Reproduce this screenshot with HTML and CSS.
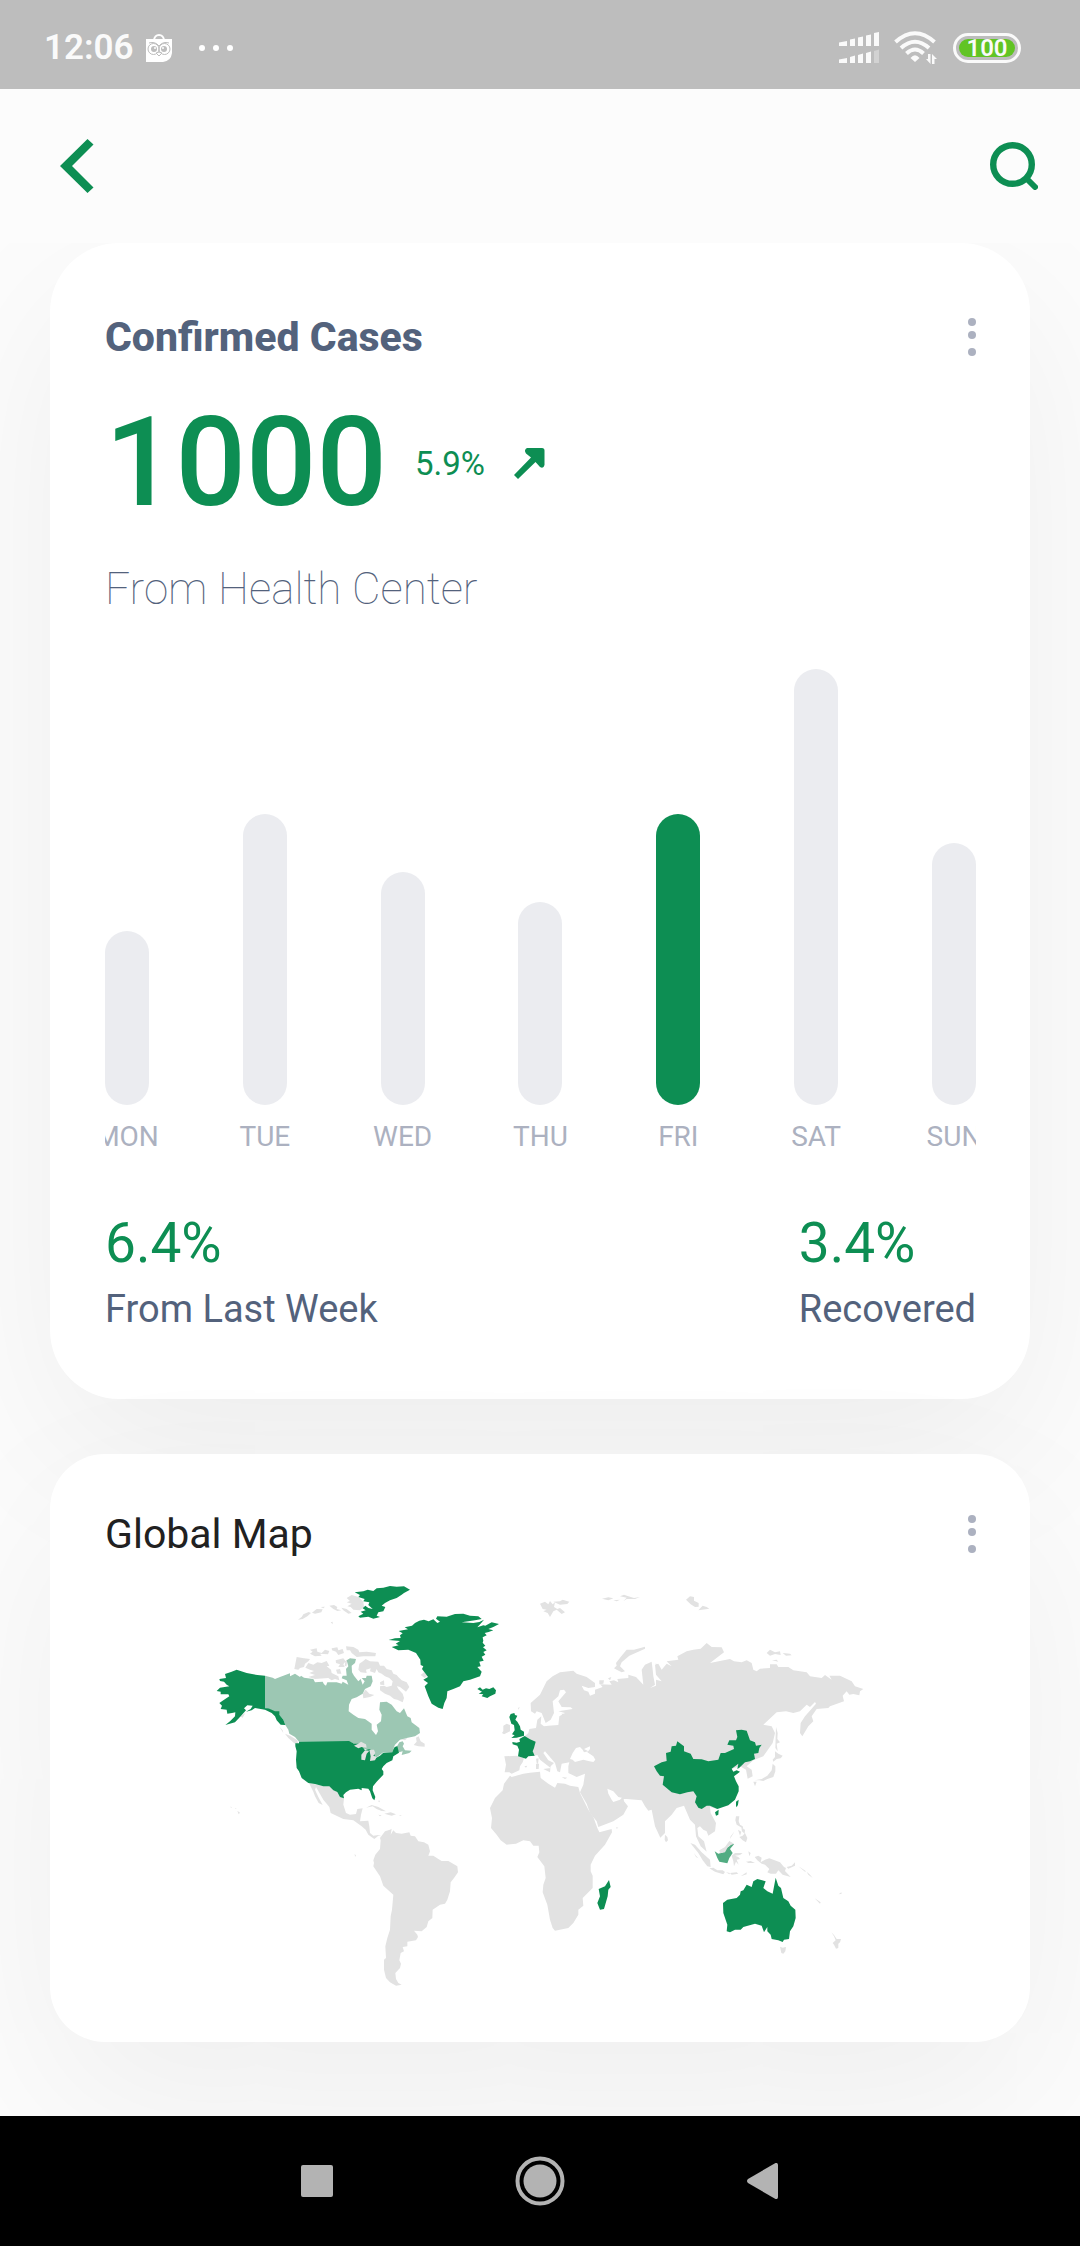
FILE: index.html
```html
<!DOCTYPE html>
<html lang="en">
<head>
<meta charset="utf-8">
<meta name="viewport" content="width=device-width, initial-scale=1">
<title>Confirmed Cases</title>
<link rel="stylesheet" href="styles.css">
</head>
<body>
<div class="status">
  <span class="status-time">12:06</span>
  <svg class="status-app" width="26" height="28" viewBox="0 0 26 28" aria-hidden="true">
    <path d="M8 7C8 -1 18 -1 18 7" fill="none" stroke="#fff" stroke-width="2"/>
    <path d="M0 5H26V19Q25 27 17 28H0Z" fill="#fff"/>
    <g fill="none" stroke="#bdbdbd" stroke-width="1"><circle cx="7.500" cy="15" r="5.500"/><circle cx="18.500" cy="15" r="5.500"/><path d="M3 9Q9 7 13 12Q17 7 23 9M10 19L13 22L16 19L13 18Z"/></g>
    <g fill="#bdbdbd"><circle cx="8" cy="15" r="3"/><circle cx="18" cy="15" r="3"/></g>
    <circle cx="9" cy="14" r="1" fill="#fff"/><circle cx="17" cy="14" r="1" fill="#fff"/>
  </svg>
  <svg class="status-more" width="34" height="6" viewBox="0 0 34 6" aria-hidden="true"><g fill="#fff"><circle cx="3" cy="3" r="3"/><circle cx="17" cy="3" r="3"/><circle cx="31" cy="3" r="3"/></g></svg>
  <div class="status-right">
    <svg width="40" height="32" viewBox="0 0 40 32" aria-hidden="true">
      <g fill="#fafafa"><path d="M0 10.500L8 9V14H0ZM11 7.500L16 6.500V14H11ZM19 5.500L24 4.500V14H19ZM27 3.500L32 2.500V14H27ZM35 1L40 0V14H35ZM0 27.500L8 26V31H0ZM11 25L16 23.500V31H11ZM19 23L24 21.500V31H19ZM27 21L32 19.500V31H27Z"/><path opacity=".35" d="M35 19L40 17.500V31H35Z"/></g>
    </svg>
    <svg width="44" height="34" viewBox="0 0 44 34" aria-hidden="true">
      <g fill="none" stroke="#fafafa" stroke-width="4"><path d="M1.500 11Q21 -6.500 40.500 11"/><path d="M7 17Q21 4.500 35 17"/><path d="M12.500 22.500Q21 14.500 29.500 22.500"/></g>
      <path d="M16.500 27Q21 21.500 25.500 27L21 31Z" fill="#fafafa"/>
      <path d="M34 23H36.500V33L32 28H34ZM38 33V23L43 28H40.500V33Z" fill="#fafafa"/>
    </svg>
    <div class="battery"><span class="battery-level">100</span></div>
  </div>
</div>

<header class="topbar">
  <button class="icon-button" type="button" aria-label="Back">
    <svg width="34" height="54" viewBox="0 0 34 54"><path d="M0 27L27.500 0L33.500 5.500L12 27L33.500 48.500L27.500 54Z"/></svg>
  </button>
  <button class="icon-button" type="button" aria-label="Search">
    <svg width="48" height="48" viewBox="0 0 48 48"><circle cx="22.500" cy="22.500" r="19.300" fill="none" stroke="#0d8e53" stroke-width="6.400"/><path d="M37 37L45 45" stroke="#0d8e53" stroke-width="6" stroke-linecap="round"/></svg>
  </button>
</header>

<main class="content">
  <section class="card card-report">
    <div class="card-head">
      <h1 class="card-title">Confirmed Cases</h1>
      <button class="icon-button menu" type="button" aria-label="Report options">
        <svg width="8" height="38" viewBox="0 0 8 38"><circle cx="4" cy="4" r="4"/><circle cx="4" cy="17" r="4"/><circle cx="4" cy="34" r="4"/></svg>
      </button>
    </div>
    <div class="total">
      <span class="total-value">1000</span>
      <span class="total-change">5.9%</span>
      <svg class="total-arrow" width="31" height="31" viewBox="0 0 31 31" aria-hidden="true"><path d="M13 0H28Q30.500 0 30.500 2.500V17Q29.500 21 26 19L21.500 14L4 31L0 27L17 9.500L12 5.500Q9.500 2 13 0Z" fill="#0d8e53"/></svg>
    </div>
    <p class="source">From Health Center</p>
    <div class="chart">
      <div class="day"><div class="bar" style="height:40%"></div></div>
      <div class="day"><div class="bar" style="height:66.670%"></div></div>
      <div class="day"><div class="bar" style="height:53.330%"></div></div>
      <div class="day"><div class="bar" style="height:46.670%"></div></div>
      <div class="day"><div class="bar bar-active" style="height:66.670%"></div></div>
      <div class="day"><div class="bar" style="height:100%"></div></div>
      <div class="day"><div class="bar" style="height:60%"></div></div>
    </div>
    <div class="axis">
      <span class="axis-label">MON</span><span class="axis-label">TUE</span><span class="axis-label">WED</span><span class="axis-label">THU</span><span class="axis-label">FRI</span><span class="axis-label">SAT</span><span class="axis-label">SUN</span>
    </div>
    <div class="stats">
      <div class="stat"><div class="stat-value">6.4%</div><div class="stat-label">From Last Week</div></div>
      <div class="stat"><div class="stat-value">3.4%</div><div class="stat-label">Recovered</div></div>
    </div>
  </section>

  <section class="card card-map">
    <div class="card-head">
      <h2 class="card-title">Global Map</h2>
      <button class="icon-button menu" type="button" aria-label="Map options">
        <svg width="8" height="38" viewBox="0 0 8 38"><circle cx="4" cy="4" r="4"/><circle cx="4" cy="17" r="4"/><circle cx="4" cy="34" r="4"/></svg>
      </button>
    </div>
    <svg class="map" viewBox="48 40 1950 1221" role="img" aria-label="World map">
      <g class="land">
        <path d="M440 85L455 76L468 80L475 82L490 96L492 112L480 122L460 120L452 112L442 110L455 102L440 98L450 94Z"/>
        <path d="M294 150L308 148L322 140L333 130L326 127L310 134L305 142ZM336 129L350 118L368 119L364 128L345 132ZM362 112L375 111L370 116ZM388 108L402 106L412 112L410 118L424 122L412 124L400 118ZM424 114L440 118L455 130L445 132L430 122ZM392 158L398 156L398 164Z"/>
        <path d="M330 240L350 236L352 246L365 250L375 240L388 244L384 254L360 252L365 258L345 260L330 252L338 246ZM395 236L412 233L415 242L428 238L432 250L415 256L408 246L396 242ZM438 230L460 232L475 240L478 248L500 246L528 250L526 260L490 260L470 262L455 250L450 242L440 242Z"/>
        <path d="M283 298L290 262L312 266L330 268L325 275L315 282L312 292L300 295L295 300ZM316 294L325 280L340 285L352 278L365 280L380 274L388 288L380 290L393 300L395 310L415 320L418 332L405 328L395 332L385 325L345 328L325 322L345 316L328 310L342 304L330 300ZM407 272L430 266L437 275L430 284L434 292L415 292L420 284L408 280ZM408 300L420 298L424 312L412 312ZM436 275L441 270L440 288L434 290Z"/>
        <path d="M475 300L478 282L490 274L497 268L510 275L535 276L540 288L552 288L560 298L575 302L580 312L590 316L595 322L605 332L620 338L628 352L618 366L600 352L590 348L595 358L608 372L612 385L608 398L592 390L582 388L570 378L555 372L540 362L540 350L552 348L560 352L575 348L578 335L568 325L555 320L545 312L535 308L530 298L525 310L510 305L512 296L498 300L500 310L482 308ZM488 372L497 360L508 372L523 376L510 382L490 386ZM540 338L552 332L553 346L541 345ZM580 346L588 340L600 352ZM662 316L672 308L682 318L674 325Z"/>
        <path d="M641 526L650 516L648 504L656 500L662 515L674 522L674 531L655 530ZM600 507L622 506L615 512ZM255 492L270 498L292 512L296 528L282 520L265 505ZM237 470L248 482L250 490ZM120 440L136 430L128 444ZM90 711L96 712L94 714ZM105 715L110 717L107 718ZM112 723L120 729L116 734Z"/>
        <path d="M327 640L365 648L388 648L400 662L412 665L432 686L430 705L438 730L450 735L468 733L472 718L488 716L483 735L480 755L505 753L508 770L510 790L520 798L535 796L545 800L535 798L523 808L505 795L497 780L485 770L460 752L430 748L392 730L388 712L370 690L348 652L345 660L355 682L368 706L356 700L345 680L340 666Z"/>
        <path d="M498 714L515 706L535 712L558 725L545 724L530 718L518 710ZM553 732L572 728L588 734L575 738ZM535 735L545 737L540 740ZM598 736L606 738L600 739ZM537 690L540 698L535 696ZM464 852L468 858L465 861Z"/>
        <path d="M540 805L555 785L570 780L575 777L572 795L580 782L588 790L605 792L628 788L632 798L645 800L655 815L672 818L685 825L690 845L685 858L700 858L715 868L725 874L745 874L772 890L774 908L762 925L752 938L750 965L742 990L735 1002L720 1005L698 1020L697 1045L685 1055L680 1072L665 1085L642 1083L652 1095L654 1102L648 1112L622 1116L622 1130L608 1132L612 1145L602 1150L598 1172L603 1182L600 1195L586 1210L588 1228L595 1240L605 1245L588 1248L570 1238L558 1225L552 1200L552 1170L558 1165L556 1130L562 1105L570 1080L572 1040L576 1020L580 975L550 948L540 920L520 890L522 880L520 872L526 855L540 838L542 812Z"/>
      </g>
      <path class="tint" d="M195 318L218 324L225 328L240 322L262 314L270 311L270 320L285 312L300 322L303 318L312 324L340 328L345 338L368 336L372 344L378 348L382 338L410 338L425 342L428 336L445 345L440 332L425 326L428 318L440 318L438 298L445 290L440 272L450 266L468 268L465 280L455 288L456 308L462 318L475 335L482 328L488 345L494 335L485 325L498 325L500 318L515 318L518 335L512 350L495 358L488 372L470 383L455 388L447 405L446 425L460 435L475 445L495 448L515 462L515 480L528 496L534 485L530 465L543 455L545 435L538 420L540 398L560 396L575 405L590 425L600 430L612 416L622 440L632 445L635 458L658 475L660 490L645 500L620 505L600 510L585 525L580 537L592 528L598 518L608 515L612 522L608 530L615 542L635 543L628 550L605 556L608 545L597 548L590 540L575 548L550 548L540 555L520 570L512 570L515 560L520 552L500 540L478 532L462 522L447 516L297 516L285 502L268 492L265 480L256 466L250 450L238 435L222 427L205 416L195 418Z"/>
      <g class="strong">
        <path d="M464 68L490 65L503 60L520 64L530 56L550 54L570 49L590 51L612 50L630 60L612 70L605 75L590 85L570 92L555 100L545 108L556 112L550 125L535 128L530 138L540 142L520 147L505 141L480 144L475 140L490 132L482 126L497 122L488 116L496 108L505 115L518 118L505 106L508 98L490 95L494 88L475 82L480 76Z"/>
        <path d="M566 211L585 206L602 205L600 197L608 191L596 184L624 179L614 173L636 168L645 160L658 153L672 150L686 155L700 149L712 160L720 156L708 147L712 140L740 141L765 133L790 132L810 138L835 140L845 148L825 152L785 158L820 160L838 157L852 150L843 161L832 173L850 167L856 168L875 158L897 163L880 172L865 178L880 182L866 187L854 190L860 197L848 203L850 213L848 219L856 228L849 233L860 242L850 247L856 255L845 261L851 273L838 276L842 290L832 292L845 306L840 320L810 330L790 335L780 350L760 358L742 365L740 385L733 400L728 418L715 414L695 402L685 380L674 350L684 340L670 330L684 322L675 310L666 298L670 290L662 286L661 270L648 250L625 240L595 242L575 232L596 227L587 222L600 214Z"/>
        <path d="M832 358L840 353L848 360L858 356L868 358L880 353L888 362L886 372L870 380L862 385L845 380L850 374L836 372L846 366Z"/>
        <path d="M195 318L172 316L140 310L110 300L95 306L75 313L78 325L58 328L60 334L72 336L80 345L88 350L60 354L50 364L62 366L62 374L85 374L88 380L70 392L58 400L66 408L62 418L80 420L82 432L96 430L106 428L105 440L90 455L76 466L105 458L122 440L138 422L132 416L142 407L158 408L152 418L138 426L155 422L165 415L195 420L215 430L225 440L230 452L242 465L256 466L250 450L238 435L238 425L225 425L205 416L195 416Z"/>
        <path d="M286 521L297 521L297 516L447 514L462 522L475 522L490 535L495 542L510 538L520 550L525 558L518 570L540 558L550 549L577 548L584 532L592 530L597 549L580 560L577 572L560 580L550 590L545 598L550 605L550 615L530 636L519 650L518 662L526 682L523 692L517 686L510 665L505 657L485 655L485 662L475 657L450 660L438 668L430 676L432 686L420 682L412 667L400 662L388 650L370 650L345 643L325 640L305 625L297 605L290 595L288 570L290 545L286 530Z"/>
      </g>
      <path class="land" d="M462 528L475 522L483 516L498 524L500 534L485 532L475 536ZM484 570L484 555L495 542L508 543L500 552L495 572ZM508 540L522 540L526 550L520 558L530 562L525 572L510 574L512 560Z"/>
      <g transform="translate(840 0)">
        <g class="land">
          <path d="M134 500L145 490L148 478L168 475L172 450L184 440L182 462L192 470L205 468L235 466L238 440L255 430L235 425L278 418L272 413L245 412L235 395L258 368L252 360L240 362L235 380L218 395L222 430L212 450L197 460L185 430L170 425L165 432L153 425L152 400L180 375L200 335L218 320L240 308L280 303L290 312L320 322L345 340L345 352L325 355L305 348L312 362L325 366L330 378L345 372L345 360L368 352L360 344L395 345L388 335L402 332L415 338L412 328L445 325L445 315L468 322L490 345L485 300L495 285L515 276L518 300L520 320L525 345L510 355L528 348L528 330L545 335L528 315L525 285L535 282L545 300L560 282L575 290L560 275L595 270L592 260L620 245L640 240L662 237L680 220L695 232L725 233L732 248L690 280L750 268L762 275L785 278L800 272L815 280L820 300L830 305L840 297L870 295L870 284L890 284L895 292L925 292L940 302L980 308L990 320L1025 325L1035 316L1055 330L1048 318L1080 318L1115 335L1125 350L1150 358L1140 365L1138 377L1120 373L1108 375L1100 365L1088 378L1092 395L1050 410L1045 415L1010 418L995 440L1000 455L985 470L967 500L960 490L962 460L975 440L1008 402L1005 397L990 412L980 405L960 425L940 430L918 425L890 428L850 465L875 470L885 490L878 520L850 560L820 572L800 590L815 600L818 620L803 627L798 600L780 590L755 597L740 640L712 718L690 712L692 730L708 760L705 785L685 798L680 785L670 780L660 770L652 775L655 800L672 815L680 846L662 830L648 800L645 765L630 750L612 708L590 715L575 735L555 755L555 790L541 804L525 770L515 720L505 723L495 710L485 692L440 688L415 682L400 665L382 657L385 672L395 690L400 697L420 690L430 680L432 695L444 710L430 735L400 755L355 772L350 755L330 730L320 702L300 668L310 645L315 612L290 622L265 610L265 590L268 578L245 582L240 608L232 605L225 580L195 545L190 550L205 572L222 580L212 590L210 608L190 598L212 595L180 570L172 556L158 560L155 530Z"/>
          <path d="M66 490L70 484L70 468L80 462L90 466L90 485L72 494ZM73 560L110 558L132 566L128 578L120 590L118 602L95 612L88 608L74 608L78 585ZM133 590L142 588L138 594ZM168 567L176 566L174 582L170 580ZM168 582L177 582L176 598L168 598ZM245 622L262 624L255 628ZM114 415L119 412L116 420ZM244 432L252 432L250 440Z"/>
          <path d="M90 618L95 622L130 612L150 609L180 606L182 625L205 642L225 654L232 640L255 642L270 648L295 652L300 670L325 720L340 742L352 775L358 788L395 778L396 788L375 825L345 858L332 885L332 905L338 918L338 955L308 985L310 1008L295 1020L295 1035L280 1060L265 1075L225 1083L218 1075L210 1050L202 1005L188 968L190 945L197 925L193 890L172 862L178 848L176 828L160 828L150 815L130 812L108 822L80 825L62 812L50 795L33 775L36 745L30 715L45 685L68 662L72 642Z"/>
          <path d="M180 102L195 96L205 104L210 94L218 104L225 98L222 112L232 118L240 115L255 128L245 133L230 120L220 125L210 142L203 130L190 125L200 120L188 118ZM220 96L240 95L248 90L268 96L262 103L240 105ZM366 87L385 83L400 86L385 92ZM400 92L420 90L410 95ZM420 80L432 75L445 80L462 85L480 82L465 88L440 88L430 95L440 84ZM610 78L620 80ZM618 90L630 80L642 82L642 93L656 100L656 111L645 112L632 104ZM655 122L668 108L680 112L688 117ZM860 250L870 240L885 248L900 245L902 256L885 253L870 258ZM908 250L930 252L935 257L918 258ZM876 272L890 270L895 276ZM878 263L884 266Z"/>
          <path d="M402 296L410 288L408 280L425 258L440 240L462 240L495 231L495 237L475 246L448 258L425 278L420 290L435 305L425 308L410 300ZM358 332L372 332L370 342L358 344ZM384 326L394 322L390 332ZM527 280L534 290L530 296Z"/>
          <path d="M888 472L893 490L892 508L900 518L890 522L893 545L886 535ZM878 570L885 562L885 545L895 552L908 558L902 566L890 568L880 576ZM824 632L845 628L862 618L875 602L878 582L886 590L886 605L880 622L862 628L850 634L838 632ZM820 636L830 636L825 650ZM555 795L562 802L564 812L558 818L554 810ZM408 773L415 774L410 777Z"/>
          <path d="M768 740L778 740L776 755L780 765L788 770L790 778L778 770L770 765L766 752ZM784 775L795 780L794 792L786 785ZM778 802L788 798L795 790L802 805L798 818L788 812ZM774 780L784 786L780 798ZM764 785L750 808L752 800Z"/>
          <path d="M631 820L645 825L665 848L690 870L692 892L682 890L668 872L655 850ZM642 850L648 858L655 866L648 862ZM688 896L700 894L712 902L728 902L735 907L730 914L705 906ZM738 908L750 910L748 914ZM750 910L770 908L775 912L755 915ZM782 920L800 908L800 914ZM755 858L765 850L788 850L780 856L765 858L775 862L780 868L770 870L776 885L768 876L762 890L760 875ZM805 845L812 850L808 860ZM798 876L812 874L825 880L805 880Z"/>
          <path d="M824 862L835 858L845 864L842 878L855 870L868 866L900 878L912 892L918 895L915 904L932 922L908 915L895 902L888 912L872 912L862 908L868 898L855 885L845 882L832 872ZM920 892L935 888L945 878L945 888L925 897ZM955 890L968 898L978 905L975 906ZM980 906L990 915L998 925L985 915ZM1004 986L1022 998L1020 1002ZM1076 974L1084 968L1085 972Z"/>
          <path d="M900 1131L908 1134L918 1132L916 1145L910 1152L904 1150ZM1054 1088L1062 1096L1070 1108L1083 1108L1080 1118L1075 1122L1075 1135L1068 1137L1062 1125L1058 1120L1067 1112L1062 1100Z"/>
        </g>
        <path class="sea" d="M270 568L278 550L288 535L300 532L308 540L312 548L325 545L312 538L330 530L330 538L322 548L340 560L346 570L340 577L325 574L310 570L285 577L278 570Z"/>
        <path class="half" d="M704 845L715 852L730 848L740 835L750 828L752 820L762 824L750 838L758 850L748 865L742 881L718 876L712 865Z"/>
        <path class="land" d="M718 842L735 832L748 814L762 822L745 830L735 848L720 851Z"/>
        <g class="strong">
          <path d="M88 442L92 433L103 430L105 436L112 438L106 450L112 456L120 470L122 480L132 486L132 498L110 504L94 505L104 497L96 494L104 482L102 466L94 462Z"/>
          <path d="M97 517L110 519L120 516L118 508L134 499L150 509L167 516L162 535L158 545L164 558L145 560L138 567L114 560L117 540L112 528L98 524Z"/>
          <path d="M387 931L392 952L385 960L383 980L372 1018L360 1020L352 1000L360 980L356 958L375 950Z"/>
          <path d="M522 590L545 578L560 574L558 550L572 546L575 530L588 528L592 515L612 530L612 545L632 552L640 568L665 569L685 575L715 570L722 550L735 550L762 538L760 528L742 525L748 512L768 512L772 502L768 482L785 480L800 483L810 512L825 518L828 528L845 525L838 535L835 550L822 552L825 568L810 575L795 578L778 594L772 598L775 582L755 597L760 606L770 602L780 606L762 620L768 635L776 650L776 665L765 690L745 707L712 718L690 708L680 708L665 718L655 714L645 698L650 680L640 665L622 668L600 674L575 668L548 645L552 620L540 618L530 605Z"/>
          <path d="M705 728L716 720L715 735L708 738ZM768 708L768 696L776 690L774 705L770 713Z"/>
          <path d="M729 1000L742 990L770 985L780 975L782 965L790 962L800 945L815 952L820 935L832 928L857 935L850 955L862 965L878 972L887 924L895 948L903 955L910 985L925 995L932 1008L946 1020L947 1045L940 1070L930 1085L927 1108L912 1110L908 1117L895 1112L875 1108L872 1095L862 1085L862 1072L852 1088L845 1068L825 1062L790 1072L782 1080L765 1080L750 1088L740 1085L742 1065L730 1030Z"/>
        </g>
      </g>
    </svg>
  </section>
</main>

<nav class="navbar" aria-label="System navigation">
  <button class="icon-button" type="button" aria-label="Recent apps"><svg width="32" height="32" viewBox="0 0 32 32"><rect width="32" height="32" rx="2"/></svg></button>
  <button class="icon-button" type="button" aria-label="Home"><svg width="50" height="50" viewBox="0 0 50 50"><circle cx="25" cy="25" r="22.500" fill="none" stroke="#b3b3b3" stroke-width="4"/><circle cx="25" cy="25" r="16.500"/></svg></button>
  <button class="icon-button" type="button" aria-label="Previous screen"><svg width="32" height="36" viewBox="0 0 32 36"><path d="M1 16L28.500 0Q31 -.5 31 2V34Q31 36.500 28.500 36L1 20Q-1 18 1 16Z"/></svg></button>
</nav>
</body>
</html>
```
FILE: styles.css
```css
* {
  box-sizing: border-box;
}

body {
  margin: 0;
  min-height: 100vh;
  display: flex;
  flex-direction: column;
  background: #fcfcfc;
  font-family: Roboto, "Liberation Sans", sans-serif;
  color: #53627c;
}

h1, h2, p {
  margin: 0;
}

svg {
  display: block;
  flex: none;
}

.icon-button {
  display: flex;
  padding: 0;
  border: 0;
  background: none;
  fill: #0d8e53;
  cursor: pointer;
}

/* Status bar */
.status {
  display: flex;
  align-items: center;
  height: 89px;
  padding: 6px 59px 0 44px;
  background: #bdbdbd;
  color: #fafafa;
}

.status-time {
  font-size: 35px;
  font-weight: 600;
}

.status-app {
  margin-left: 12px;
}

.status-more {
  margin-left: 27px;
}

.status-right {
  display: flex;
  align-items: center;
  gap: 15px;
  margin-left: auto;
}

.battery {
  width: 68px;
  height: 30px;
  padding: 3px;
  border: 3px solid #fafafa;
  border-radius: 15px;
}

.battery-level {
  display: block;
  height: 18px;
  border-radius: 9px;
  background: #61c424;
  font-size: 24px;
  font-weight: 600;
  line-height: 19px;
  text-align: center;
}

/* App bar */
.topbar {
  display: flex;
  align-items: center;
  justify-content: space-between;
  height: 154px;
  padding: 0 42px 0 60px;
}

/* Cards */
.content {
  display: flex;
  flex-direction: column;
  flex: 1;
  gap: 55px;
  padding: 0 50px 74px;
  overflow: hidden;
}

.card {
  background: #fff;
  box-shadow: 0 58px 171px rgba(0, 0, 0, 0.06);
}

.card-report {
  padding: 55px 54px 67px 55px;
  border-radius: 69px;
}

.card-map {
  padding: 55px 54px 52px 55px;
  border-radius: 55px;
}

.card-head {
  display: flex;
  align-items: center;
  justify-content: space-between;
}

.card-report .card-head {
  height: 78px;
}

.card-map .card-head {
  height: 50px;
}

.card-title {
  font-size: 41px;
  font-weight: 800;
  line-height: 48px;
}

.card-map .card-title {
  font-weight: 400;
  color: #212121;
}

.menu {
  fill: #acb1c0;
}

.total {
  display: flex;
  align-items: center;
  margin-top: 14px;
  color: #0d8e53;
}

.total-value {
  font-size: 124px;
  font-weight: 500;
  line-height: 146px;
}

.total-change {
  margin-left: 28px;
  font-size: 33px;
}

.total-arrow {
  margin-left: 29px;
}

.source {
  margin-top: 27px;
  font-size: 44px;
  font-weight: 100;
  line-height: 52px;
}

/* Weekly chart */
.chart {
  display: flex;
  justify-content: space-between;
  height: 436px;
  margin-top: 54px;
}

.day {
  display: flex;
  align-items: flex-end;
  width: 44px;
}

.bar {
  width: 100%;
  border-radius: 22px;
  background: #ebecf0;
}

.bar-active {
  background: #0d8e53;
}

.axis {
  display: flex;
  justify-content: space-between;
  margin-top: 16px;
  overflow: hidden;
  color: #acb1c0;
  font-size: 28px;
  line-height: 32px;
}

.axis-label {
  display: flex;
  justify-content: center;
  width: 44px;
  white-space: nowrap;
}

.stats {
  display: flex;
  justify-content: space-between;
  margin-top: 58px;
}

.stat-value {
  font-size: 55px;
  line-height: 64px;
  color: #0d8e53;
}

.stat-label {
  margin-top: 11px;
  font-size: 38px;
  line-height: 46px;
}

/* World map */
.map {
  width: 650px;
  max-width: 100%;
  margin: 24px auto 0;
}

.land {
  fill: #e2e2e2;
}

.strong {
  fill: #0d8e53;
}

.tint {
  fill: #9cc7b3;
}

.half {
  fill: #52ac82;
}

.sea {
  fill: #fff;
}

/* System navigation */
.navbar {
  display: flex;
  align-items: center;
  justify-content: center;
  gap: 182px;
  height: 130px;
  background: #000;
}

.navbar .icon-button {
  fill: #b3b3b3;
}
```
